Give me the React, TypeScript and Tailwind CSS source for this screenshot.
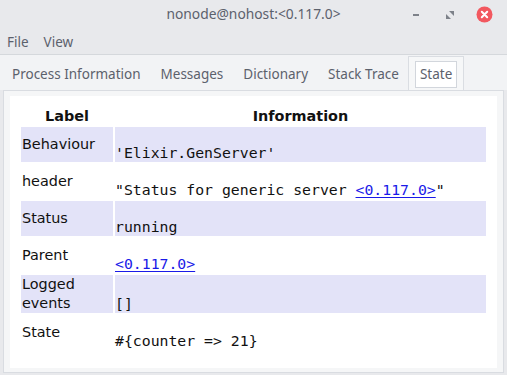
import React from 'react';

const ui = { fontFamily: '"Noto Sans", "Open Sans", sans-serif' };
const sans = { fontFamily: '"DejaVu Sans", Verdana, sans-serif' };
const mono = { fontFamily: '"DejaVu Sans Mono", monospace' };

function Pid() {
  return <span className="text-[#1a1ae8] underline underline-offset-2">&lt;0.117.0&gt;</span>;
}

const rows: { label: React.ReactNode; info: React.ReactNode; shaded: boolean }[] = [
  { label: 'Behaviour', info: "'Elixir.GenServer'", shaded: true },
  { label: 'header', info: <>"Status for generic server <Pid />"</>, shaded: false },
  { label: 'Status', info: 'running', shaded: true },
  { label: 'Parent', info: <Pid />, shaded: false },
  { label: <>Logged<br />events</>, info: '[]', shaded: true },
  { label: 'State', info: '#{counter => 21}', shaded: false },
];

const tabs = ['Process Information', 'Messages', 'Dictionary', 'Stack Trace'];

export default function App() {
  return (
    <div className="w-[507px] h-[375px] overflow-hidden bg-[#e8e9ec] flex flex-col" style={ui}>
      {/* title bar */}
      <div className="relative h-[29px] flex items-center justify-center text-[13.8px] text-[#5c616c]">
        <span>nonode@nohost:&lt;0.117.0&gt;</span>
        <div className="absolute right-[6px] top-0 h-[29px] flex items-center">
          <div className="w-[34px] flex justify-center">
            <div className="w-[6px] h-[2px] bg-[#7d8189]" />
          </div>
          <div className="w-[34px] flex justify-center">
            <svg width="8" height="8" viewBox="0 0 8 8">
              <path d="M3 0 H8 V5 Z" fill="#7d8189" />
              <path d="M0 3 V8 H5 Z" fill="#7d8189" />
            </svg>
          </div>
          <div className="w-[34px] flex justify-center">
            <svg width="17" height="17" viewBox="0 0 17 17">
              <circle cx="8.5" cy="8.5" r="8" fill="#f2585f" />
              <path d="M5.8 5.8 L11.2 11.2 M11.2 5.8 L5.8 11.2" stroke="#fff" strokeWidth="2" strokeLinecap="round" />
            </svg>
          </div>
        </div>
      </div>

      {/* menu bar */}
      <div className="h-[26px] flex items-center gap-[15px] pl-[7px] pt-[2px] text-[13.5px] text-[#5c616c] border-b border-[#d5d8dc]">
        <span>File</span>
        <span>View</span>
      </div>

      {/* tab bar */}
      <div className="h-[35px] flex items-stretch pl-[2px] bg-[#f2f3f5] text-[13.5px] text-[#5c616c]">
        {tabs.map((t) => (
          <div key={t} className="px-[10px] pt-[3px] flex items-center">{t}</div>
        ))}
        <div className="ml-[-1px] mt-[1px] px-[6px] pt-[1px] flex items-center border border-b-0 border-[#dadde2] bg-[#f6f7f8]">
          <div className="px-[4px] h-[27px] pt-[1px] flex items-center border border-[#d2d6dc] bg-white">State</div>
        </div>
      </div>

      {/* content frame */}
      <div className="mx-[3px] h-[283px] border border-[#d9dce1] bg-[#f5f6f7] px-[6px] pt-[5px] pb-[4px]">
        <div className="h-full bg-white px-[9px] pt-[5px]" style={sans}>
          <table className="border-separate border-spacing-[2px] text-[#111] text-[14.4px]">
            <thead>
              <tr className="h-[22px]">
                <th className="w-[92px] p-0 font-bold text-center align-bottom leading-[18px]">Label</th>
                <th className="w-[371px] p-0 font-bold text-center align-bottom leading-[18px]">Information</th>
              </tr>
            </thead>
            <tbody>
              {rows.map((r, i) => (
                <tr key={i} className="h-[35px]">
                  <td className={`p-0 pl-[1px] align-middle leading-[19px] ${r.shaded ? 'bg-[#e3e3f8]' : ''}`}>{r.label}</td>
                  <td className={`p-0 pb-[1px] align-bottom leading-[17px] text-[14.8px] whitespace-pre ${r.shaded ? 'bg-[#e3e3f8]' : ''}`} style={mono}>{r.info}</td>
                </tr>
              ))}
            </tbody>
          </table>
        </div>
      </div>
    </div>
  );
}
